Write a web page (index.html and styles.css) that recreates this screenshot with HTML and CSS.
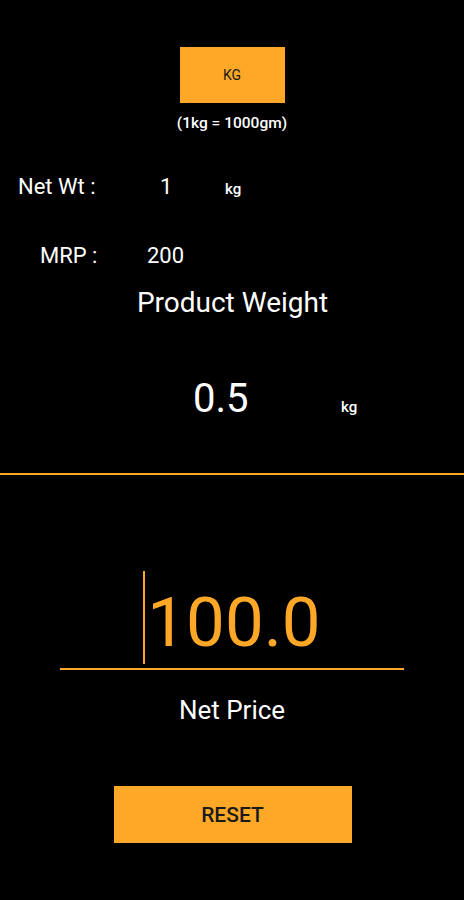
FILE: index.html
```html
<!DOCTYPE html>
<html lang="en">
<head>
    <meta charset="UTF-8">
    <meta name="viewport" content="width=device-width, initial-scale=1.0">
    <title>Price Calculator</title>
    <link rel="stylesheet" href="styles.css">
</head>
<body>
    <div class="screen">
        <button class="unit-btn" type="button">KG</button>
        <div class="hint">(1kg = 1000gm)</div>

        <div class="row row-wt">
            <span class="label">Net Wt :</span>
            <span class="value">1</span>
            <span class="unit">kg</span>
        </div>
        <div class="row row-mrp">
            <span class="label">MRP :</span>
            <span class="value">200</span>
        </div>

        <div class="title">Product Weight</div>
        <div class="weight">
            <span class="weight-value">0.5</span>
            <span class="unit">kg</span>
        </div>

        <div class="divider"></div>

        <div class="price-field">
            <span class="cursor"></span>
            <span class="price">100.0</span>
        </div>
        <div class="caption">Net Price</div>

        <button class="reset-btn" type="button">RESET</button>
    </div>
</body>
</html>
```

FILE: styles.css
```css
body {
    margin: 0;
    padding: 0;
    background: #000;
    color: #fff;
    font-family: Roboto, "Noto Sans", sans-serif;
}
.screen {
    width: 464px;
    height: 900px;
    display: flex;
    flex-direction: column;
}
.unit-btn {
    align-self: center;
    margin-top: 47px;
    width: 105px;
    height: 56px;
    background-color: #ffa828;
    color: #1a1a1a;
    border: none;
    font-family: Roboto, sans-serif;
    font-size: 14px;
    padding: 0;
}
.hint {
    margin-top: 10px;
    text-align: center;
    font-size: 15.5px;
    line-height: 20px;
    font-weight: 500;
}
.row {
    display: flex;
    align-items: baseline;
    font-size: 22px;
    line-height: 26px;
}
.row-wt {
    margin-top: 41px;
    padding-left: 18px;
}
.row-wt .label {
    width: 142px;
}
.row-wt .value {
    width: 65px;
}
.row-mrp {
    margin-top: 41px;
    padding-left: 40px;
}
.row-mrp .label {
    width: 107px;
}
.unit {
    font-size: 15px;
    font-weight: 500;
}
.title {
    margin-top: 17px;
    text-align: center;
    font-size: 28px;
    line-height: 34px;
    padding-left: 1px;
}
.weight {
    margin-top: 55px;
    display: flex;
    align-items: baseline;
    padding-left: 193px;
    font-size: 40px;
    line-height: 48px;
}
.weight-value {
    width: 148px;
}
.divider {
    margin-top: 42px;
    height: 2px;
    background-color: #ffa828;
}
.price-field {
    margin: 96px 60px 0 60px;
    padding-bottom: 4px;
    border-bottom: 2px solid #ffa828;
    display: flex;
    justify-content: center;
    color: #ffa828;
}
.cursor {
    width: 2px;
    height: 93px;
    background-color: #ffa828;
    margin-right: 2px;
}
.price {
    font-size: 69px;
    line-height: 83px;
    padding-top: 10px;
}
.caption {
    margin-top: 24px;
    text-align: center;
    font-size: 26px;
    line-height: 32px;
}
.reset-btn {
    align-self: center;
    margin-top: 60px;
    margin-left: 1px;
    width: 238px;
    height: 57px;
    background-color: #ffa828;
    color: #1a1a1a;
    border: none;
    font-family: Roboto, sans-serif;
    font-size: 21px;
    font-weight: 500;
    padding: 0;
}
```
